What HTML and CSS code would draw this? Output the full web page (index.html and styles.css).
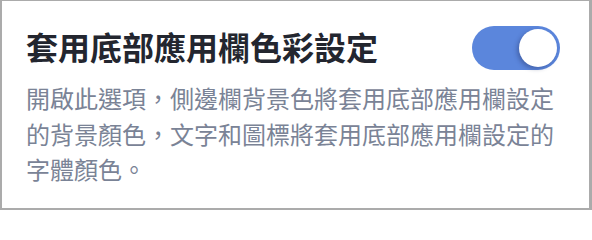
FILE: index.html
```html
<!DOCTYPE html>
<html lang="zh-Hant">
<head>
<meta charset="utf-8">
<link rel="stylesheet" href="styles.css">
</head>
<body>
<div class="card">
  <div class="header">
    <h1 class="title">套用底部應用欄色彩設定</h1>
    <div class="toggle"><div class="knob"></div></div>
  </div>
  <p class="desc">開啟此選項，側邊欄背景色將套用底部應用欄設定的背景顏色，文字和圖標將套用底部應用欄設定的字體顏色。</p>
</div>
</body>
</html>
```
FILE: styles.css
```css
html, body {
  margin: 0;
  padding: 0;
  background: #ffffff;
}
.card {
  box-sizing: border-box;
  width: 592px;
  height: 210px;
  border-style: solid;
  border-color: #ababab;
  border-width: 1px 3px 2px 2px;
  padding: 25px 24px 0 24px;
  font-family: "Noto Sans CJK TC", "Noto Sans", sans-serif;
  background: #ffffff;
}
.header {
  display: flex;
  align-items: center;
  justify-content: space-between;
  height: 44px;
}
.title {
  margin: 0;
  font-size: 32px;
  font-weight: 700;
  color: #23262f;
  line-height: 44px;
  margin-top: -4px;
}
.toggle {
  box-sizing: border-box;
  width: 88px;
  height: 44px;
  border-radius: 22px;
  background: #5b86dc;
  margin-right: 5px;
  display: flex;
  justify-content: flex-end;
  align-items: center;
  padding: 0 3px;
}
.knob {
  width: 38px;
  height: 38px;
  border-radius: 50%;
  background: #ffffff;
  box-shadow: -2px 2px 4px rgba(30, 40, 90, 0.35);
}
.desc {
  margin: 10px 0 0 0;
  font-size: 24px;
  line-height: 35.5px;
  color: #7a8396;
}
```
